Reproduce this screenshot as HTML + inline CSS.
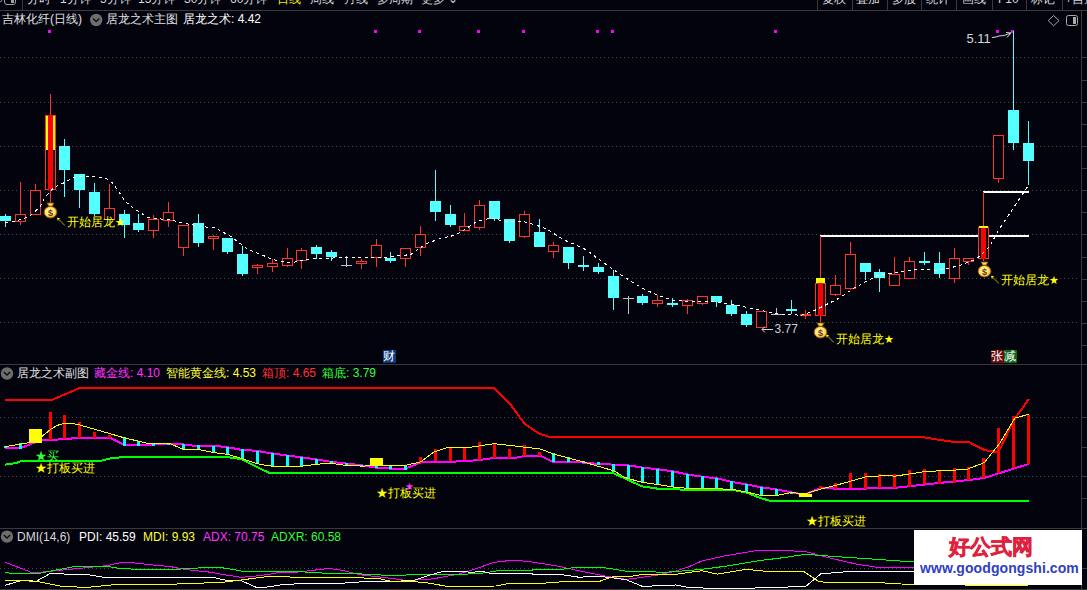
<!DOCTYPE html>
<html><head><meta charset="utf-8">
<style>
html,body{margin:0;padding:0;background:#03030e;}
body{width:1087px;height:590px;position:relative;overflow:hidden;font-family:"Liberation Sans",sans-serif;}
.t{position:absolute;white-space:nowrap;line-height:14px;font-family:"Liberation Sans",sans-serif;}
</style></head><body>
<svg style="position:absolute;left:0;top:0" width="1087" height="590">
<g fill="none" stroke="#4a4a4a" stroke-width="1" stroke-dasharray="1 3" shape-rendering="crispEdges">
<line x1="0" y1="57.5" x2="1078" y2="57.5"/>
<line x1="0" y1="102.5" x2="1078" y2="102.5"/>
<line x1="0" y1="146.5" x2="1078" y2="146.5"/>
<line x1="0" y1="190.5" x2="1078" y2="190.5"/>
<line x1="0" y1="234.5" x2="1078" y2="234.5"/>
<line x1="0" y1="278.5" x2="1078" y2="278.5"/>
<line x1="0" y1="322.5" x2="1078" y2="322.5"/>
<line x1="0" y1="417.5" x2="1078" y2="417.5"/>
<line x1="0" y1="476.5" x2="1078" y2="476.5"/>
<line x1="0" y1="568.5" x2="1078" y2="568.5"/>
</g>
<g stroke="#3a3a3a" stroke-width="1" shape-rendering="crispEdges">
<line x1="0" y1="10.5" x2="1087" y2="10.5"/>
<line x1="0" y1="364.5" x2="1087" y2="364.5"/>
<line x1="0" y1="528.5" x2="1087" y2="528.5"/>
<line x1="1081.5" y1="10" x2="1081.5" y2="590"/>
<line x1="0" y1="589.5" x2="1087" y2="589.5"/>
<line x1="22.5" y1="0" x2="22.5" y2="10"/>
<line x1="817.5" y1="0" x2="817.5" y2="10"/>
<line x1="852.5" y1="0" x2="852.5" y2="10"/>
<line x1="887.5" y1="0" x2="887.5" y2="10"/>
<line x1="921.5" y1="0" x2="921.5" y2="10"/>
<line x1="956.5" y1="0" x2="956.5" y2="10"/>
<line x1="992.5" y1="0" x2="992.5" y2="10"/>
<line x1="1026.5" y1="0" x2="1026.5" y2="10"/>
<line x1="1062.5" y1="0" x2="1062.5" y2="10"/>
<line x1="1082" y1="57.5" x2="1087" y2="57.5"/>
<line x1="1082" y1="80.5" x2="1087" y2="80.5"/>
<line x1="1082" y1="102.5" x2="1087" y2="102.5"/>
<line x1="1082" y1="124.5" x2="1087" y2="124.5"/>
<line x1="1082" y1="146.5" x2="1087" y2="146.5"/>
<line x1="1082" y1="168.5" x2="1087" y2="168.5"/>
<line x1="1082" y1="190.5" x2="1087" y2="190.5"/>
<line x1="1082" y1="212.5" x2="1087" y2="212.5"/>
<line x1="1082" y1="234.5" x2="1087" y2="234.5"/>
<line x1="1082" y1="257.5" x2="1087" y2="257.5"/>
<line x1="1082" y1="279.5" x2="1087" y2="279.5"/>
<line x1="1082" y1="301.5" x2="1087" y2="301.5"/>
<line x1="1082" y1="323.5" x2="1087" y2="323.5"/>
<line x1="1082" y1="345.5" x2="1087" y2="345.5"/>
<line x1="1082" y1="417.5" x2="1087" y2="417.5"/>
<line x1="1082" y1="447.5" x2="1087" y2="447.5"/>
<line x1="1082" y1="476.5" x2="1087" y2="476.5"/>
<line x1="1082" y1="498.5" x2="1087" y2="498.5"/>
<line x1="1082" y1="568.5" x2="1087" y2="568.5"/>
</g>
<g fill="#ff00ff" shape-rendering="crispEdges">
<rect x="48" y="30" width="3" height="3"/>
<rect x="374" y="30" width="3" height="3"/>
<rect x="418" y="30" width="3" height="3"/>
<rect x="477" y="30" width="3" height="3"/>
<rect x="522" y="30" width="3" height="3"/>
<rect x="596" y="30" width="3" height="3"/>
<rect x="611" y="30" width="3" height="3"/>
<rect x="774" y="30" width="3" height="3"/>
<rect x="996" y="30" width="3" height="3"/>
<rect x="1011" y="30" width="3" height="3"/>
</g>
<g fill="#ffffff" shape-rendering="crispEdges">
<rect x="820" y="235" width="209" height="2"/>
<rect x="983" y="191" width="46" height="2"/>
</g>
<g shape-rendering="crispEdges">
<line x1="5.5" y1="214" x2="5.5" y2="227" stroke="#54ffff"/>
<rect x="0" y="216" width="11" height="5" fill="#54ffff"/>
<line x1="20.5" y1="182" x2="20.5" y2="214" stroke="#ff3232"/>
<line x1="20.5" y1="222" x2="20.5" y2="225" stroke="#ff3232"/>
<rect x="15.5" y="214.5" width="10" height="7" fill="#03030e" stroke="#ff3232"/>
<line x1="35.5" y1="184" x2="35.5" y2="190" stroke="#ff3232"/>
<line x1="35.5" y1="215" x2="35.5" y2="215" stroke="#ff3232"/>
<rect x="30.5" y="190.5" width="10" height="24" fill="#03030e" stroke="#ff3232"/>
<line x1="50.5" y1="94" x2="50.5" y2="203" stroke="#ff3232"/>
<rect x="45.5" y="115.5" width="10" height="74" fill="#03030e" stroke="#ff3232"/>
<rect x="48" y="115" width="5" height="75" fill="#ff0000"/>
<rect x="46" y="116" width="2" height="34" fill="#ffff00"/>
<rect x="53" y="116" width="2" height="34" fill="#ffff00"/>
<line x1="64.5" y1="139" x2="64.5" y2="197" stroke="#54ffff"/>
<rect x="59" y="146" width="11" height="24" fill="#54ffff"/>
<line x1="79.5" y1="174" x2="79.5" y2="208" stroke="#54ffff"/>
<rect x="74" y="174" width="11" height="16" fill="#54ffff"/>
<line x1="94.5" y1="183" x2="94.5" y2="216" stroke="#54ffff"/>
<rect x="89" y="192" width="11" height="22" fill="#54ffff"/>
<line x1="109.5" y1="184" x2="109.5" y2="208" stroke="#ff3232"/>
<line x1="109.5" y1="220" x2="109.5" y2="220" stroke="#ff3232"/>
<rect x="104.5" y="208.5" width="10" height="11" fill="#03030e" stroke="#ff3232"/>
<line x1="124.5" y1="210" x2="124.5" y2="238" stroke="#54ffff"/>
<rect x="119" y="214" width="11" height="11" fill="#54ffff"/>
<line x1="138.5" y1="214" x2="138.5" y2="232" stroke="#54ffff"/>
<rect x="133" y="223" width="11" height="7" fill="#54ffff"/>
<line x1="153.5" y1="215" x2="153.5" y2="219" stroke="#ff3232"/>
<line x1="153.5" y1="231" x2="153.5" y2="238" stroke="#ff3232"/>
<rect x="148.5" y="219.5" width="10" height="11" fill="#03030e" stroke="#ff3232"/>
<line x1="168.5" y1="202" x2="168.5" y2="212" stroke="#ff3232"/>
<line x1="168.5" y1="221" x2="168.5" y2="227" stroke="#ff3232"/>
<rect x="163.5" y="212.5" width="10" height="8" fill="#03030e" stroke="#ff3232"/>
<line x1="183.5" y1="225" x2="183.5" y2="225" stroke="#ff3232"/>
<line x1="183.5" y1="248" x2="183.5" y2="256" stroke="#ff3232"/>
<rect x="178.5" y="225.5" width="10" height="22" fill="#03030e" stroke="#ff3232"/>
<line x1="198.5" y1="214" x2="198.5" y2="247" stroke="#54ffff"/>
<rect x="193" y="223" width="11" height="20" fill="#54ffff"/>
<line x1="213.5" y1="235" x2="213.5" y2="236" stroke="#ff3232"/>
<line x1="213.5" y1="239" x2="213.5" y2="250" stroke="#ff3232"/>
<rect x="208.5" y="236.5" width="10" height="2" fill="#03030e" stroke="#ff3232"/>
<line x1="227.5" y1="238" x2="227.5" y2="254" stroke="#54ffff"/>
<rect x="222" y="238" width="11" height="14" fill="#54ffff"/>
<line x1="242.5" y1="246" x2="242.5" y2="276" stroke="#54ffff"/>
<rect x="237" y="254" width="11" height="20" fill="#54ffff"/>
<line x1="257.5" y1="264" x2="257.5" y2="265" stroke="#ff3232"/>
<line x1="257.5" y1="268" x2="257.5" y2="274" stroke="#ff3232"/>
<rect x="252.5" y="265.5" width="10" height="2" fill="#03030e" stroke="#ff3232"/>
<line x1="272.5" y1="259" x2="272.5" y2="263" stroke="#ff3232"/>
<line x1="272.5" y1="267" x2="272.5" y2="272" stroke="#ff3232"/>
<rect x="267.5" y="263.5" width="10" height="3" fill="#03030e" stroke="#ff3232"/>
<line x1="287.5" y1="248" x2="287.5" y2="258" stroke="#ff3232"/>
<line x1="287.5" y1="266" x2="287.5" y2="267" stroke="#ff3232"/>
<rect x="282.5" y="258.5" width="10" height="7" fill="#03030e" stroke="#ff3232"/>
<line x1="301.5" y1="248" x2="301.5" y2="250" stroke="#ff3232"/>
<line x1="301.5" y1="261" x2="301.5" y2="269" stroke="#ff3232"/>
<rect x="296.5" y="250.5" width="10" height="10" fill="#03030e" stroke="#ff3232"/>
<line x1="316.5" y1="245" x2="316.5" y2="259" stroke="#54ffff"/>
<rect x="311" y="247" width="11" height="7" fill="#54ffff"/>
<line x1="331.5" y1="250" x2="331.5" y2="261" stroke="#54ffff"/>
<rect x="326" y="252" width="11" height="5" fill="#54ffff"/>
<line x1="346.5" y1="256" x2="346.5" y2="267" stroke="#c0c0c0"/>
<line x1="341" y1="265.5" x2="352" y2="265.5" stroke="#c0c0c0"/>
<line x1="361.5" y1="259" x2="361.5" y2="261" stroke="#ff3232"/>
<line x1="361.5" y1="264" x2="361.5" y2="269" stroke="#ff3232"/>
<rect x="356.5" y="261.5" width="10" height="2" fill="#03030e" stroke="#ff3232"/>
<line x1="376.5" y1="239" x2="376.5" y2="245" stroke="#ff3232"/>
<line x1="376.5" y1="258" x2="376.5" y2="267" stroke="#ff3232"/>
<rect x="371.5" y="245.5" width="10" height="12" fill="#03030e" stroke="#ff3232"/>
<line x1="390.5" y1="252" x2="390.5" y2="263" stroke="#54ffff"/>
<rect x="385" y="258" width="11" height="3" fill="#54ffff"/>
<line x1="405.5" y1="248" x2="405.5" y2="248" stroke="#ff3232"/>
<line x1="405.5" y1="259" x2="405.5" y2="267" stroke="#ff3232"/>
<rect x="400.5" y="248.5" width="10" height="10" fill="#03030e" stroke="#ff3232"/>
<line x1="420.5" y1="226" x2="420.5" y2="234" stroke="#ff3232"/>
<line x1="420.5" y1="248" x2="420.5" y2="256" stroke="#ff3232"/>
<rect x="415.5" y="234.5" width="10" height="13" fill="#03030e" stroke="#ff3232"/>
<line x1="435.5" y1="170" x2="435.5" y2="221" stroke="#54ffff"/>
<rect x="430" y="201" width="11" height="11" fill="#54ffff"/>
<line x1="450.5" y1="205" x2="450.5" y2="227" stroke="#54ffff"/>
<rect x="445" y="214" width="11" height="11" fill="#54ffff"/>
<line x1="464.5" y1="213" x2="464.5" y2="226" stroke="#ff3232"/>
<line x1="464.5" y1="231" x2="464.5" y2="231" stroke="#ff3232"/>
<rect x="459.5" y="226.5" width="10" height="4" fill="#03030e" stroke="#ff3232"/>
<line x1="479.5" y1="200" x2="479.5" y2="205" stroke="#ff3232"/>
<line x1="479.5" y1="228" x2="479.5" y2="230" stroke="#ff3232"/>
<rect x="474.5" y="205.5" width="10" height="22" fill="#03030e" stroke="#ff3232"/>
<line x1="494.5" y1="201" x2="494.5" y2="221" stroke="#54ffff"/>
<rect x="489" y="201" width="11" height="18" fill="#54ffff"/>
<line x1="509.5" y1="219" x2="509.5" y2="243" stroke="#54ffff"/>
<rect x="504" y="219" width="11" height="22" fill="#54ffff"/>
<line x1="524.5" y1="211" x2="524.5" y2="214" stroke="#ff3232"/>
<line x1="524.5" y1="237" x2="524.5" y2="238" stroke="#ff3232"/>
<rect x="519.5" y="214.5" width="10" height="22" fill="#03030e" stroke="#ff3232"/>
<line x1="539.5" y1="219" x2="539.5" y2="247" stroke="#54ffff"/>
<rect x="534" y="232" width="11" height="15" fill="#54ffff"/>
<line x1="553.5" y1="242" x2="553.5" y2="245" stroke="#ff3232"/>
<line x1="553.5" y1="252" x2="553.5" y2="258" stroke="#ff3232"/>
<rect x="548.5" y="245.5" width="10" height="6" fill="#03030e" stroke="#ff3232"/>
<line x1="568.5" y1="247" x2="568.5" y2="269" stroke="#54ffff"/>
<rect x="563" y="247" width="11" height="16" fill="#54ffff"/>
<line x1="583.5" y1="256" x2="583.5" y2="271" stroke="#54ffff"/>
<rect x="578" y="265" width="11" height="2" fill="#54ffff"/>
<line x1="598.5" y1="263" x2="598.5" y2="274" stroke="#54ffff"/>
<rect x="593" y="267" width="11" height="5" fill="#54ffff"/>
<line x1="613.5" y1="270" x2="613.5" y2="310" stroke="#54ffff"/>
<rect x="608" y="276" width="11" height="22" fill="#54ffff"/>
<line x1="628.5" y1="296" x2="628.5" y2="314" stroke="#c0c0c0"/>
<line x1="623" y1="298.5" x2="634" y2="298.5" stroke="#c0c0c0"/>
<line x1="642.5" y1="294" x2="642.5" y2="305" stroke="#54ffff"/>
<rect x="637" y="296" width="11" height="7" fill="#54ffff"/>
<line x1="657.5" y1="295" x2="657.5" y2="300" stroke="#ff3232"/>
<line x1="657.5" y1="304" x2="657.5" y2="307" stroke="#ff3232"/>
<rect x="652.5" y="300.5" width="10" height="3" fill="#03030e" stroke="#ff3232"/>
<line x1="672.5" y1="298" x2="672.5" y2="307" stroke="#54ffff"/>
<rect x="667" y="303" width="11" height="2" fill="#54ffff"/>
<line x1="687.5" y1="299" x2="687.5" y2="300" stroke="#ff3232"/>
<line x1="687.5" y1="306" x2="687.5" y2="314" stroke="#ff3232"/>
<rect x="682.5" y="300.5" width="10" height="5" fill="#03030e" stroke="#ff3232"/>
<line x1="702.5" y1="296" x2="702.5" y2="296" stroke="#ff3232"/>
<line x1="702.5" y1="304" x2="702.5" y2="305" stroke="#ff3232"/>
<rect x="697.5" y="296.5" width="10" height="7" fill="#03030e" stroke="#ff3232"/>
<line x1="716.5" y1="296" x2="716.5" y2="307" stroke="#54ffff"/>
<rect x="711" y="296" width="11" height="6" fill="#54ffff"/>
<line x1="731.5" y1="300" x2="731.5" y2="316" stroke="#54ffff"/>
<rect x="726" y="305" width="11" height="9" fill="#54ffff"/>
<line x1="746.5" y1="311" x2="746.5" y2="327" stroke="#54ffff"/>
<rect x="741" y="314" width="11" height="11" fill="#54ffff"/>
<line x1="761.5" y1="311" x2="761.5" y2="311" stroke="#ff3232"/>
<line x1="761.5" y1="328" x2="761.5" y2="328" stroke="#ff3232"/>
<rect x="756.5" y="311.5" width="10" height="16" fill="#03030e" stroke="#ff3232"/>
<line x1="776.5" y1="308" x2="776.5" y2="315" stroke="#c0c0c0"/>
<line x1="771" y1="314.5" x2="782" y2="314.5" stroke="#c0c0c0"/>
<line x1="791.5" y1="300" x2="791.5" y2="314" stroke="#54ffff"/>
<rect x="786" y="309" width="11" height="2" fill="#54ffff"/>
<line x1="805.5" y1="310" x2="805.5" y2="314" stroke="#ff3232"/>
<line x1="805.5" y1="316" x2="805.5" y2="319" stroke="#ff3232"/>
<rect x="800.5" y="314.5" width="10" height="1" fill="#03030e" stroke="#ff3232"/>
<line x1="820.5" y1="236" x2="820.5" y2="322" stroke="#ff3232"/>
<rect x="815.5" y="283.5" width="10" height="32" fill="#03030e" stroke="#ff3232"/>
<rect x="818" y="283" width="5" height="33" fill="#ff0000"/>
<rect x="816" y="278" width="9" height="5" fill="#ffff00"/>
<line x1="835.5" y1="275" x2="835.5" y2="285" stroke="#ff3232"/>
<line x1="835.5" y1="295" x2="835.5" y2="296" stroke="#ff3232"/>
<rect x="830.5" y="285.5" width="10" height="9" fill="#03030e" stroke="#ff3232"/>
<line x1="850.5" y1="242" x2="850.5" y2="254" stroke="#ff3232"/>
<line x1="850.5" y1="289" x2="850.5" y2="290" stroke="#ff3232"/>
<rect x="845.5" y="254.5" width="10" height="34" fill="#03030e" stroke="#ff3232"/>
<line x1="865.5" y1="263" x2="865.5" y2="280" stroke="#54ffff"/>
<rect x="860" y="263" width="11" height="9" fill="#54ffff"/>
<line x1="879.5" y1="269" x2="879.5" y2="292" stroke="#54ffff"/>
<rect x="874" y="272" width="11" height="6" fill="#54ffff"/>
<line x1="894.5" y1="257" x2="894.5" y2="274" stroke="#ff3232"/>
<line x1="894.5" y1="286" x2="894.5" y2="286" stroke="#ff3232"/>
<rect x="889.5" y="274.5" width="10" height="11" fill="#03030e" stroke="#ff3232"/>
<line x1="909.5" y1="257" x2="909.5" y2="261" stroke="#ff3232"/>
<line x1="909.5" y1="279" x2="909.5" y2="279" stroke="#ff3232"/>
<rect x="904.5" y="261.5" width="10" height="17" fill="#03030e" stroke="#ff3232"/>
<line x1="924.5" y1="252" x2="924.5" y2="265" stroke="#54ffff"/>
<rect x="919" y="261" width="11" height="2" fill="#54ffff"/>
<line x1="939.5" y1="252" x2="939.5" y2="278" stroke="#54ffff"/>
<rect x="934" y="263" width="11" height="11" fill="#54ffff"/>
<line x1="954.5" y1="248" x2="954.5" y2="258" stroke="#ff3232"/>
<line x1="954.5" y1="279" x2="954.5" y2="283" stroke="#ff3232"/>
<rect x="949.5" y="258.5" width="10" height="20" fill="#03030e" stroke="#ff3232"/>
<line x1="968.5" y1="258" x2="968.5" y2="258" stroke="#ff3232"/>
<line x1="968.5" y1="262" x2="968.5" y2="265" stroke="#ff3232"/>
<rect x="963.5" y="258.5" width="10" height="3" fill="#03030e" stroke="#ff3232"/>
<line x1="983.5" y1="192" x2="983.5" y2="261" stroke="#ff3232"/>
<rect x="978.5" y="227.5" width="10" height="31" fill="#03030e" stroke="#ff3232"/>
<rect x="981" y="227" width="5" height="32" fill="#ff0000"/>
<rect x="979" y="226" width="9" height="2" fill="#ffff00"/>
<line x1="998.5" y1="135" x2="998.5" y2="135" stroke="#ff3232"/>
<line x1="998.5" y1="179" x2="998.5" y2="183" stroke="#ff3232"/>
<rect x="993.5" y="135.5" width="10" height="43" fill="#03030e" stroke="#ff3232"/>
<line x1="1013.5" y1="31" x2="1013.5" y2="150" stroke="#54ffff"/>
<rect x="1008" y="110" width="11" height="33" fill="#54ffff"/>
<line x1="1028.5" y1="121" x2="1028.5" y2="185" stroke="#54ffff"/>
<rect x="1023" y="143" width="11" height="18" fill="#54ffff"/>
</g>
<polyline points="5.4,222.4 13.5,221.7 24.4,218.3 31.2,214.9 40.7,206.0 44.7,198.0 52.9,188.5 58.3,185.0 65.0,182.4 73.2,177.6 81.3,176.3 94.9,177.0 105.7,178.3 112.5,183.0 119.3,192.5 124.7,200.7 131.5,206.8 148.0,217.6 170.7,220.0 197.0,226.0 215.4,228.0 231.7,237.0 248.0,249.5 262.0,255.0 273.3,259.7 290.6,262.7 314.0,258.6 346.5,257.6 381.0,257.6 410.5,254.6 426.8,243.4 441.0,238.3 455.2,235.2 465.4,229.0 477.6,221.0 491.8,218.0 505.0,221.5 525.3,222.0 537.0,225.5 543.0,227.6 549.8,231.0 556.0,235.0 561.6,238.3 567.6,241.7 573.7,244.0 579.7,246.6 585.7,249.6 591.4,253.7 597.7,258.6 620.0,274.2 633.6,283.0 647.0,290.5 660.7,296.3 674.2,300.7 694.5,301.4 715.0,301.8 732.5,304.5 754.0,308.8 779.6,314.3 801.7,315.2 812.7,311.4 825.9,304.8 839.0,298.2 855.0,287.5 877.0,275.8 896.8,272.5 916.7,269.2 938.7,270.3 958.5,265.9 976.0,259.2 989.3,247.0 999.3,229.0 1028.0,186.0" fill="none" stroke="#ffffff" stroke-width="1" stroke-dasharray="3 3.5" shape-rendering="crispEdges"/>
<polyline shape-rendering="crispEdges" points="5.0,400.0 51.7,400.0 79.7,388.0 494.0,388.0 500.0,393.8 510.2,404.0 524.4,423.7 538.6,433.3 549.8,437.0 923.3,437.2 933.5,439.0 951.3,441.5 967.8,441.5 984.3,450.0 998.3,452.5 1013.5,420.7 1028.8,399.0" fill="none" stroke="#ff0000" stroke-width="2"/>
<polyline shape-rendering="crispEdges" points="5.0,464.7 16.0,463.0 20.4,461.4 98.0,461.4 110.0,458.5 123.8,457.0 226.8,457.0 242.0,459.3 250.0,463.6 260.0,468.6 269.5,472.9 612.9,473.0 625.0,478.5 642.0,486.4 657.2,488.6 687.8,489.8 731.9,489.8 746.3,492.5 761.2,498.3 771.4,501.1 1028.8,501.0" fill="none" stroke="#00ff00" stroke-width="2"/>
<polyline shape-rendering="crispEdges" points="5.0,447.8 21.2,447.8 34.0,442.7 42.4,440.0 64.4,439.3 79.7,437.6 110.0,437.6 123.8,444.7 169.0,444.4 183.5,444.4 184.4,445.4 213.2,445.8 226.8,447.0 242.0,450.0 257.3,450.8 263.6,452.2 272.0,453.4 287.3,455.6 300.9,457.3 316.0,459.3 331.4,461.9 346.7,463.6 362.0,465.3 376.4,467.8 390.3,468.6 405.5,468.6 420.8,462.4 449.6,461.9 478.5,460.2 493.7,458.0 510.0,457.6 516.3,457.7 524.4,455.9 540.7,455.9 552.9,461.8 581.3,462.4 597.6,463.8 628.1,465.4 642.0,467.5 657.2,469.2 672.5,471.2 687.8,474.6 703.0,476.8 717.4,478.5 731.9,481.9 746.3,484.4 760.0,487.0 776.1,489.4 791.0,492.3 804.0,494.6 820.9,488.0 835.8,488.6 865.6,488.6 885.0,487.5 894.0,488.0 909.3,486.3 938.5,483.0 969.0,480.0 984.3,477.9 1028.8,463.9" fill="none" stroke="#ff00ff" stroke-width="2"/>
<g shape-rendering="crispEdges">
<rect x="4" y="446.0" width="3" height="2.0" fill="#00ffff"/>
<rect x="19" y="443.0" width="3" height="5.6" fill="#00ffff"/>
<rect x="49" y="411.9" width="3" height="28.1" fill="#ff0000"/>
<rect x="63" y="414.7" width="3" height="24.6" fill="#ff0000"/>
<rect x="78" y="422.0" width="3" height="15.6" fill="#ff0000"/>
<rect x="93" y="431.7" width="3" height="5.9" fill="#ff0000"/>
<rect x="108" y="435.0" width="3" height="2.6" fill="#ff0000"/>
<rect x="123" y="437.3" width="3" height="8.5" fill="#00ffff"/>
<rect x="137" y="441.0" width="3" height="4.8" fill="#00ffff"/>
<rect x="152" y="444.4" width="3" height="1.5" fill="#00ffff"/>
<rect x="167" y="443.2" width="3" height="2.1" fill="#00ffff"/>
<rect x="182" y="444.4" width="3" height="5.3" fill="#00ffff"/>
<rect x="197" y="444.9" width="3" height="4.8" fill="#00ffff"/>
<rect x="212" y="445.8" width="3" height="6.7" fill="#00ffff"/>
<rect x="226" y="447.1" width="3" height="7.5" fill="#00ffff"/>
<rect x="241" y="449.2" width="3" height="9.3" fill="#00ffff"/>
<rect x="256" y="450.8" width="3" height="12.8" fill="#00ffff"/>
<rect x="271" y="452.9" width="3" height="13.5" fill="#00ffff"/>
<rect x="286" y="455.1" width="3" height="11.3" fill="#00ffff"/>
<rect x="300" y="457.3" width="3" height="9.1" fill="#00ffff"/>
<rect x="315" y="459.0" width="3" height="5.7" fill="#00ffff"/>
<rect x="330" y="461.0" width="3" height="2.6" fill="#00ffff"/>
<rect x="345" y="463.0" width="3" height="2.8" fill="#00ffff"/>
<rect x="360" y="464.9" width="3" height="1.7" fill="#00ffff"/>
<rect x="375" y="466.1" width="3" height="1.7" fill="#00ffff"/>
<rect x="389" y="465.3" width="3" height="3.3" fill="#00ffff"/>
<rect x="404" y="465.3" width="3" height="4.2" fill="#00ffff"/>
<rect x="419" y="457.0" width="3" height="5.7" fill="#ff0000"/>
<rect x="434" y="449.0" width="3" height="12.0" fill="#ff0000"/>
<rect x="449" y="448.0" width="3" height="13.0" fill="#ff0000"/>
<rect x="463" y="448.0" width="3" height="12.2" fill="#ff0000"/>
<rect x="478" y="442.0" width="3" height="18.2" fill="#ff0000"/>
<rect x="493" y="443.7" width="3" height="14.3" fill="#ff0000"/>
<rect x="508" y="449.0" width="3" height="8.6" fill="#ff0000"/>
<rect x="523" y="445.0" width="3" height="10.7" fill="#ff0000"/>
<rect x="538" y="452.2" width="3" height="3.5" fill="#ff0000"/>
<rect x="552" y="453.2" width="3" height="9.2" fill="#00ffff"/>
<rect x="567" y="456.9" width="3" height="5.5" fill="#00ffff"/>
<rect x="582" y="461.3" width="3" height="2.1" fill="#00ffff"/>
<rect x="597" y="462.4" width="3" height="3.0" fill="#00ffff"/>
<rect x="612" y="463.8" width="3" height="7.7" fill="#00ffff"/>
<rect x="627" y="465.0" width="3" height="13.6" fill="#00ffff"/>
<rect x="641" y="467.1" width="3" height="15.6" fill="#00ffff"/>
<rect x="656" y="469.2" width="3" height="15.5" fill="#00ffff"/>
<rect x="671" y="470.8" width="3" height="16.2" fill="#00ffff"/>
<rect x="686" y="474.2" width="3" height="14.4" fill="#00ffff"/>
<rect x="701" y="476.3" width="3" height="12.9" fill="#00ffff"/>
<rect x="715" y="478.0" width="3" height="11.2" fill="#00ffff"/>
<rect x="730" y="481.0" width="3" height="8.5" fill="#00ffff"/>
<rect x="745" y="484.0" width="3" height="8.0" fill="#00ffff"/>
<rect x="760" y="486.7" width="3" height="8.8" fill="#00ffff"/>
<rect x="775" y="489.0" width="3" height="6.5" fill="#00ffff"/>
<rect x="790" y="491.8" width="3" height="1.8" fill="#00ffff"/>
<rect x="804" y="493.6" width="3" height="1.5" fill="#00ffff"/>
<rect x="819" y="486.0" width="3" height="3.4" fill="#ff0000"/>
<rect x="834" y="483.4" width="3" height="5.2" fill="#ff0000"/>
<rect x="849" y="473.0" width="3" height="15.0" fill="#ff0000"/>
<rect x="864" y="473.0" width="3" height="15.6" fill="#ff0000"/>
<rect x="878" y="474.0" width="3" height="14.0" fill="#ff0000"/>
<rect x="893" y="474.0" width="3" height="14.0" fill="#ff0000"/>
<rect x="908" y="469.8" width="3" height="17.0" fill="#ff0000"/>
<rect x="923" y="469.0" width="3" height="15.2" fill="#ff0000"/>
<rect x="938" y="470.2" width="3" height="13.5" fill="#ff0000"/>
<rect x="953" y="468.2" width="3" height="14.8" fill="#ff0000"/>
<rect x="967" y="467.2" width="3" height="13.2" fill="#ff0000"/>
<rect x="982" y="458.0" width="3" height="19.9" fill="#ff0000"/>
<rect x="997" y="427.8" width="3" height="45.0" fill="#ff0000"/>
<rect x="1012" y="416.4" width="3" height="51.3" fill="#ff0000"/>
<rect x="1027" y="415.0" width="3" height="49.0" fill="#ff0000"/>
</g>
<polyline shape-rendering="crispEdges" points="5.0,446.6 34.0,441.9 42.4,436.0 50.5,429.5 57.0,425.5 64.4,423.2 71.0,423.2 79.7,425.0 125.0,438.0 150.4,444.0 170.0,443.7 182.7,449.0 198.0,449.5 213.2,452.5 226.8,454.2 242.0,458.5 250.0,461.4 260.0,464.4 272.0,466.1 302.6,466.1 316.0,464.4 329.7,463.0 345.0,465.3 362.0,466.1 385.0,465.3 405.5,465.3 420.8,461.9 434.4,451.7 448.0,447.5 471.7,447.1 493.7,443.7 510.0,445.4 540.7,449.1 553.9,454.2 581.3,461.3 613.9,470.9 625.0,477.6 642.0,482.4 657.2,484.4 672.5,487.0 687.8,488.3 731.9,489.2 746.3,492.0 761.2,495.5 776.0,495.5 791.0,492.7 806.0,493.6 820.9,489.0 835.8,485.3 850.7,481.2 865.6,476.9 885.0,475.6 895.3,476.1 925.8,471.5 966.5,469.5 984.3,462.6 999.6,443.6 1014.8,418.1 1028.8,414.3" fill="none" stroke="#ffff00" stroke-width="1"/>
<g fill="#ffff00" shape-rendering="crispEdges">
<rect x="29" y="429" width="13" height="14"/>
<rect x="370" y="458" width="13" height="8"/>
<rect x="799" y="494" width="13" height="3"/>
</g>
<polyline shape-rendering="crispEdges" points="5.0,562.2 33.0,573.0 107.6,565.5 122.5,562.2 132.0,562.7 157.3,565.5 170.0,566.5 180.0,568.5 191.5,570.3 211.4,572.3 224.6,574.8 241.2,577.3 252.8,576.4 266.0,574.8 277.6,572.8 295.8,572.3 305.8,571.1 329.0,568.5 342.2,570.3 359.9,574.8 383.0,577.3 403.0,580.0 412.9,580.2 432.7,578.9 459.2,574.0 472.5,569.8 494.0,562.4 510.6,560.4 526.6,561.2 543.0,563.7 559.7,566.5 576.2,570.3 592.8,573.6 609.4,576.8 626.0,579.4 642.5,577.3 659.0,574.8 675.6,571.1 690.0,566.2 702.0,560.9 724.2,556.0 757.3,550.5 783.8,550.5 805.9,551.6 823.5,556.5 856.6,564.2 878.7,567.5 1028.0,567.5" fill="none" stroke="#ff00ff" stroke-width="1"/>
<polyline shape-rendering="crispEdges" points="5.0,572.5 13.0,573.5 38.0,573.5 76.0,566.3 107.6,566.3 121.0,568.8 145.7,569.3 170.0,569.5 191.5,568.5 206.4,567.3 219.0,567.3 233.0,569.5 241.2,571.1 295.8,571.5 324.0,573.1 350.0,573.4 383.0,575.1 455.9,574.8 482.4,573.1 499.0,570.6 532.0,570.6 532.4,569.5 560.0,569.5 576.2,567.3 601.0,567.3 616.0,569.5 626.0,571.1 665.7,572.3 675.6,571.5 690.0,570.3 702.0,569.3 724.2,566.4 757.3,560.9 783.8,557.6 805.9,554.3 834.6,556.5 867.7,558.7 914.0,562.0 1028.0,564.0" fill="none" stroke="#00ff00" stroke-width="1"/>
<polyline shape-rendering="crispEdges" points="5.0,585.4 21.5,580.4 36.4,581.2 49.7,573.8 86.0,574.3 106.0,577.6 170.0,577.6 214.7,577.7 224.6,580.0 241.2,580.6 256.0,587.2 266.0,587.2 284.3,584.4 309.0,583.4 340.0,583.4 368.0,581.4 389.7,581.4 412.9,580.6 431.0,574.8 442.7,571.5 456.0,571.1 472.5,572.3 482.4,571.1 490.7,573.6 532.0,573.6 532.4,574.4 560.0,574.4 579.5,577.3 592.8,576.1 609.4,577.3 626.0,579.7 642.5,586.4 675.6,585.0 690.0,587.7 724.2,588.5 768.3,587.8 805.9,586.3 821.3,573.5 839.0,572.6 847.8,571.3 874.3,571.3 914.0,572.0 1028.0,572.0" fill="none" stroke="#ffffff" stroke-width="1"/>
<polyline shape-rendering="crispEdges" points="5.0,580.4 36.4,581.2 61.3,586.2 86.0,587.5 116.0,584.5 170.0,585.0 180.0,583.5 219.7,582.7 241.2,580.0 261.0,577.3 272.7,576.1 309.0,578.0 339.0,577.3 378.0,578.4 389.7,581.0 422.8,582.2 436.0,584.4 447.6,586.4 495.7,586.0 508.9,583.5 545.6,583.5 546.4,582.2 599.4,581.4 612.7,576.8 632.5,576.1 642.5,574.4 675.6,574.4 690.0,572.3 702.0,570.8 717.5,574.1 746.2,569.3 768.3,571.5 803.6,571.3 819.0,581.8 843.4,583.0 874.3,582.3 900.8,584.0 1028.0,586.0" fill="none" stroke="#ffff00" stroke-width="1"/>
<g transform="translate(44,203)">
<defs><radialGradient id="bg44" cx="0.45" cy="0.45" r="0.6"><stop offset="0" stop-color="#fffbd0"/><stop offset="0.6" stop-color="#fbe85a"/><stop offset="1" stop-color="#d8a020"/></radialGradient></defs>
<path d="M3,0 L10,0 L8,3.2 L5,3.2 Z" fill="#f8e040" stroke="#8a4a18" stroke-width="0.8"/>
<ellipse cx="6.5" cy="9.2" rx="6.4" ry="5.8" fill="url(#bg44)" stroke="#9a4a20" stroke-width="1"/>
<text x="6.5" y="12.6" font-size="9" font-weight="bold" text-anchor="middle" fill="#7a2a10" font-family="Liberation Sans, sans-serif">$</text>
</g>
<g transform="translate(814,323)">
<defs><radialGradient id="bg814" cx="0.45" cy="0.45" r="0.6"><stop offset="0" stop-color="#fffbd0"/><stop offset="0.6" stop-color="#fbe85a"/><stop offset="1" stop-color="#d8a020"/></radialGradient></defs>
<path d="M3,0 L10,0 L8,3.2 L5,3.2 Z" fill="#f8e040" stroke="#8a4a18" stroke-width="0.8"/>
<ellipse cx="6.5" cy="9.2" rx="6.4" ry="5.8" fill="url(#bg814)" stroke="#9a4a20" stroke-width="1"/>
<text x="6.5" y="12.6" font-size="9" font-weight="bold" text-anchor="middle" fill="#7a2a10" font-family="Liberation Sans, sans-serif">$</text>
</g>
<g transform="translate(978,262)">
<defs><radialGradient id="bg978" cx="0.45" cy="0.45" r="0.6"><stop offset="0" stop-color="#fffbd0"/><stop offset="0.6" stop-color="#fbe85a"/><stop offset="1" stop-color="#d8a020"/></radialGradient></defs>
<path d="M3,0 L10,0 L8,3.2 L5,3.2 Z" fill="#f8e040" stroke="#8a4a18" stroke-width="0.8"/>
<ellipse cx="6.5" cy="9.2" rx="6.4" ry="5.8" fill="url(#bg978)" stroke="#9a4a20" stroke-width="1"/>
<text x="6.5" y="12.6" font-size="9" font-weight="bold" text-anchor="middle" fill="#7a2a10" font-family="Liberation Sans, sans-serif">$</text>
</g>
</svg>

<svg style="position:absolute;left:0;top:0" width="1087" height="590">
<rect x="4.5" y="-8" width="11" height="12.5" rx="2.5" fill="none" stroke="#a0a0a0" stroke-width="1"/>
<rect x="11" y="-3" width="3" height="6" fill="#a0a0a0"/>
<circle cx="-1" cy="-1" r="3.2" fill="none" stroke="#9a90b0" stroke-width="1"/>
<circle cx="96.2" cy="20" r="6.2" fill="#6e6e6e"/>
<polyline points="93,18.5 96.2,21.5 99.4,18.5" fill="none" stroke="#111" stroke-width="1.4"/>
<circle cx="7" cy="373.5" r="6.2" fill="#6e6e6e"/>
<polyline points="3.8,372 7,375 10.2,372" fill="none" stroke="#111" stroke-width="1.4"/>
<circle cx="7" cy="536.6" r="6.2" fill="#6e6e6e"/>
<polyline points="3.8,535 7,538 10.2,535" fill="none" stroke="#111" stroke-width="1.4"/>
<polygon points="1053.6,15.5 1059,20.6 1053.6,25.8 1048.2,20.6" fill="none" stroke="#aaaaaa" stroke-width="1"/>
<rect x="1066.5" y="15.5" width="11" height="10" rx="2" fill="none" stroke="#aaaaaa" stroke-width="1"/>
<rect x="1073" y="17" width="3" height="7" fill="#aaaaaa"/>
<polyline points="992,37.5 996,37 999,36 1004,35.5 1011,33" fill="none" stroke="#d8d8d8" stroke-width="1"/>
<polyline points="1006,32.5 1011,33 1007,37.5" fill="none" stroke="#d8d8d8" stroke-width="1"/>
<line x1="762" y1="329.5" x2="773" y2="329.5" stroke="#d0d0d0" stroke-width="1"/>
<polyline points="765,326.5 762,329.5 765,332.5" fill="none" stroke="#d0d0d0" stroke-width="1"/>
</svg>

<div class="t" style="left:27px;top:-8px;color:#d8d8d8;font-size:12px;">分时</div><div class="t" style="left:60px;top:-8px;color:#d8d8d8;font-size:12px;">1分钟</div><div class="t" style="left:100px;top:-8px;color:#d8d8d8;font-size:12px;">5分钟</div><div class="t" style="left:138px;top:-8px;color:#d8d8d8;font-size:12px;">15分钟</div><div class="t" style="left:184px;top:-8px;color:#d8d8d8;font-size:12px;">30分钟</div><div class="t" style="left:230px;top:-8px;color:#d8d8d8;font-size:12px;">60分钟</div><div class="t" style="left:277px;top:-8px;color:#f0f000;font-size:12px;">日线</div><div class="t" style="left:310px;top:-8px;color:#d8d8d8;font-size:12px;">周线</div><div class="t" style="left:344px;top:-8px;color:#d8d8d8;font-size:12px;">月线</div><div class="t" style="left:377px;top:-8px;color:#d8d8d8;font-size:12px;">多周期</div><div class="t" style="left:421px;top:-8px;color:#d8d8d8;font-size:12px;">更多 ⌄</div><div class="t" style="left:822px;top:-8px;color:#d8d8d8;font-size:12px;">复权</div><div class="t" style="left:856px;top:-8px;color:#d8d8d8;font-size:12px;">叠加</div><div class="t" style="left:892px;top:-8px;color:#d8d8d8;font-size:12px;">多股</div><div class="t" style="left:926px;top:-8px;color:#d8d8d8;font-size:12px;">统计</div><div class="t" style="left:962px;top:-8px;color:#d8d8d8;font-size:12px;">画线</div><div class="t" style="left:998px;top:-8px;color:#d8d8d8;font-size:12px;">F10</div><div class="t" style="left:1031px;top:-8px;color:#d8d8d8;font-size:12px;">标记</div><div class="t" style="left:1065px;top:-8px;color:#d8d8d8;font-size:12px;">+自选</div><div class="t" style="left:2px;top:12px;color:#e0e0e0;font-size:12px;">吉林化纤(日线)</div><div class="t" style="left:106px;top:12px;color:#e0e0e0;font-size:12px;">居龙之术主图</div><div class="t" style="left:183px;top:12px;color:#ffffff;font-size:12px;">居龙之术: 4.42</div><div class="t" style="left:17px;top:366px;color:#e0e0e0;font-size:12px;">居龙之术副图</div><div class="t" style="left:94px;top:366px;color:#ff33ff;font-size:12px;">藏金线: 4.10</div><div class="t" style="left:166px;top:366px;color:#ffff33;font-size:12px;">智能黄金线: 4.53</div><div class="t" style="left:262px;top:366px;color:#ff3030;font-size:12px;">箱顶: 4.65</div><div class="t" style="left:322px;top:366px;color:#33ff33;font-size:12px;">箱底: 3.79</div><div class="t" style="left:17px;top:530px;color:#d8d8d8;font-size:12px;">DMI(14,6)</div><div class="t" style="left:79px;top:530px;color:#ffffff;font-size:12px;">PDI: 45.59</div><div class="t" style="left:143px;top:530px;color:#ffff33;font-size:12px;">MDI: 9.93</div><div class="t" style="left:203px;top:530px;color:#ff33ff;font-size:12px;">ADX: 70.75</div><div class="t" style="left:271px;top:530px;color:#33ff33;font-size:12px;">ADXR: 60.58</div><div class="t" style="left:54.5px;top:215px;color:#ffff00;font-size:12px;">↖开始居龙<span style="font-size:11px">★</span></div><div class="t" style="left:824px;top:331.5px;color:#ffff00;font-size:12px;">↖开始居龙<span style="font-size:11px">★</span></div><div class="t" style="left:988.5px;top:272.5px;color:#ffff00;font-size:12px;">↖开始居龙<span style="font-size:11px">★</span></div><div class="t" style="left:774.5px;top:322px;color:#d0d0d0;font-size:12px;">3.77</div><div class="t" style="left:966.5px;top:32px;color:#d8d8d8;font-size:13px;">5.11</div><div class="t" style="left:34.5px;top:448.5px;color:#33ff33;font-size:12px;">★买</div><div class="t" style="left:34.5px;top:460.5px;color:#ffff00;font-size:12px;">★打板买进</div><div class="t" style="left:376px;top:486px;color:#ffff00;font-size:12px;">★打板买进</div><div class="t" style="left:405px;top:479.5px;color:#ff33ff;font-size:10px;">★</div><div class="t" style="left:806px;top:514px;color:#ffff00;font-size:12px;">★打板买进</div><div class="t" style="left:383px;top:350px;width:13px;height:13px;background:#0a3a80;color:#fff;font-size:12px;line-height:13px;">财</div><div class="t" style="left:991px;top:350px;width:13px;height:13px;background:#6a0a0a;color:#fff;font-size:12px;line-height:13px;">张</div><div class="t" style="left:1004px;top:350px;width:13px;height:13px;background:#0a6a1a;color:#fff;font-size:12px;line-height:13px;">减</div><div style="position:absolute;left:914px;top:530px;width:168px;height:55px;background:#ffffff;"></div><div class="t" style="left:949px;top:540px;color:#e0203c;font-size:21px;font-weight:bold;-webkit-text-stroke:0.6px #e0203c;">好公式网</div><div class="t" style="left:920px;top:561px;color:#3040c0;font-size:14px;font-weight:bold;letter-spacing:0.08px;">www.goodgongshi.com</div>
</body></html>
